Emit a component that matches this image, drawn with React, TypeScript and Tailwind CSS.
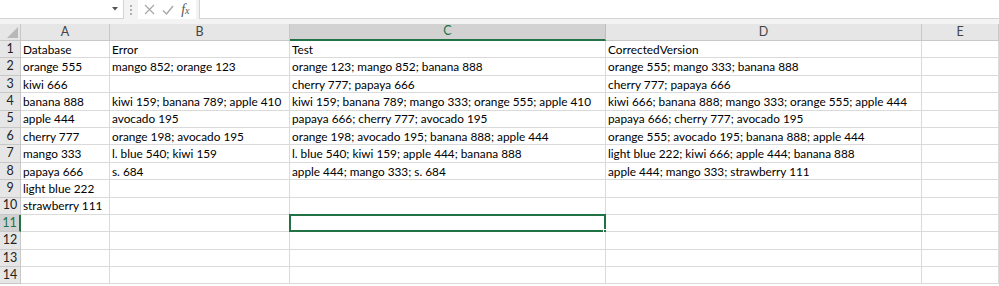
import React from 'react';

const COLS = ['A', 'B', 'C', 'D', 'E'];

const DATA: string[][] = [
  ['Database', 'Error', 'Test', 'CorrectedVersion'],
  ['orange 555', 'mango 852; orange 123', 'orange 123; mango 852; banana 888', 'orange 555; mango 333; banana 888'],
  ['kiwi 666', '', 'cherry 777; papaya 666', 'cherry 777; papaya 666'],
  ['banana 888', 'kiwi 159; banana 789; apple 410', 'kiwi 159; banana 789; mango 333; orange 555; apple 410', 'kiwi 666; banana 888; mango 333; orange 555; apple 444'],
  ['apple 444', 'avocado 195', 'papaya 666; cherry 777; avocado 195', 'papaya 666; cherry 777; avocado 195'],
  ['cherry 777', 'orange 198; avocado 195', 'orange 198; avocado 195; banana 888; apple 444', 'orange 555; avocado 195; banana 888; apple 444'],
  ['mango 333', 'l. blue 540; kiwi 159', 'l. blue 540; kiwi 159; apple 444; banana 888', 'light blue 222; kiwi 666; apple 444; banana 888'],
  ['papaya 666', 's. 684', 'apple 444; mango 333; s. 684', 'apple 444; mango 333; strawberry 111'],
  ['light blue 222'],
  ['strawberry 111'],
  [], [], [], [],
];

const SEL_ROW = 11;
const SEL_COL = 2;

export default function App() {
  return (
    <div className="w-[999px] h-[286px] overflow-hidden bg-white text-black" style={{ fontFamily: 'Lato, "Liberation Sans", sans-serif' }}>
      {/* formula bar */}
      <div className="h-[24px] bg-[#f3f3f3] flex items-start">
        <div className="w-[124px] h-[19px] bg-white border-r border-b border-[#d4d4d4] flex items-center justify-end pr-[5px]">
          <svg width="6" height="4" viewBox="0 0 6 4"><path d="M0 0h6L3 3.5z" fill="#555" /></svg>
        </div>
        <div className="w-[14px] h-[19px] flex flex-col items-center justify-center gap-[2px]">
          <span className="w-[2px] h-[2px] bg-[#b0b0b0]" />
          <span className="w-[2px] h-[2px] bg-[#b0b0b0]" />
          <span className="w-[2px] h-[2px] bg-[#b0b0b0]" />
        </div>
        <div className="w-[58px] h-[19px] bg-white flex items-center justify-around px-[3px]">
          <svg width="11" height="11" viewBox="0 0 11 11"><path d="M1 1l9 9M10 1l-9 9" stroke="#a8a8a8" strokeWidth="1.2" fill="none" /></svg>
          <svg width="12" height="10" viewBox="0 0 12 10"><path d="M1 5.5l3.5 3.5L11 1" stroke="#a8a8a8" strokeWidth="1.4" fill="none" /></svg>
          <span className="text-[14px] italic text-[#555] leading-none" style={{ fontFamily: '"Liberation Serif", serif' }}>f<span className="text-[10px]">x</span></span>
        </div>
        <div className="ml-[3px] flex-1 h-[19px] bg-white border-b border-l border-[#d4d4d4]" />
      </div>

      {/* sheet */}
      <div className="grid grid-cols-[21px_89px_180px_316px_316px_1fr] text-[11.8px]">
        {/* header row */}
        <div className="h-[17px] bg-[#e6e6e6] border-r border-b border-[#c8c8c8] relative">
          <svg className="absolute right-[2px] bottom-[2px]" width="11" height="11" viewBox="0 0 11 11"><path d="M11 0v11H0z" fill="#b8b8b8" /></svg>
        </div>
        {COLS.map((c, i) => (
          <div
            key={c}
            className={
              i === SEL_COL
                ? 'h-[17px] bg-[#d2d2d2] border-r border-b-2 border-r-[#bdbdbd] border-b-[#217346] text-[#217346] text-[12.5px] flex items-center justify-center'
                : 'h-[17px] bg-[#e6e6e6] border-r border-b border-[#c8c8c8] text-[#444] text-[12.5px] flex items-center justify-center'
            }
          >
            {c}
          </div>
        ))}

        {DATA.map((row, r) => {
          const n = r + 1;
          const sel = n === SEL_ROW;
          return (
            <React.Fragment key={n}>
              <div
                className={
                  sel
                    ? 'h-[17.4px] bg-[#d2d2d2] border-r-2 border-b border-r-[#217346] border-b-[#c8c8c8] text-[#217346] text-[12.5px] flex items-center justify-center'
                    : 'h-[17.4px] bg-[#e6e6e6] border-r border-b border-[#c8c8c8] text-[#222] text-[12.5px] flex items-center justify-center'
                }
              >
                {n}
              </div>
              {COLS.map((_, ci) => (
                <div key={ci} className="h-[17.4px] border-r border-b border-[#dadada] px-[2px] pt-[1px] flex items-center whitespace-nowrap overflow-visible relative">
                  {row[ci] ?? ''}
                  {sel && ci === SEL_COL && (
                    <div className="absolute -left-px -top-px -right-px -bottom-px border-2 border-[#217346]">
                      <span className="absolute -right-[3px] -bottom-[3px] w-[4px] h-[4px] bg-[#217346] border border-white" />
                    </div>
                  )}
                </div>
              ))}
            </React.Fragment>
          );
        })}
      </div>
    </div>
  );
}
